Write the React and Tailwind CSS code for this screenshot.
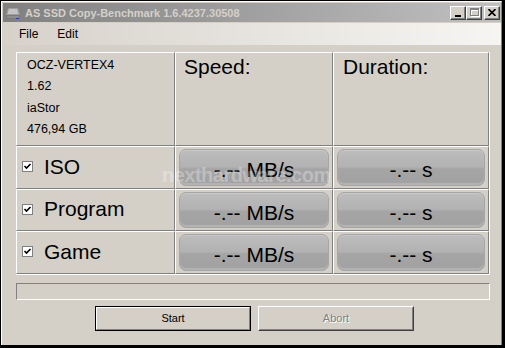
import React from "react";

function Check() {
  return (
    <div className="w-[11px] h-[11px] border border-[#808080] bg-white flex items-center justify-center shrink-0">
      <svg width="9" height="9" viewBox="0 0 9 9">
        <path d="M1.5 4 L3.5 6 L7.5 2" fill="none" stroke="#000" strokeWidth="1.6" />
      </svg>
    </div>
  );
}

function Pill({ children }) {
  return (
    <div className="h-full w-full rounded-[7px] border border-[#a6a6a6] bg-[linear-gradient(to_bottom,#bdbdbd_0%,#b2b2b2_48%,#a5a5a5_54%,#a1a1a1_100%)] shadow-[inset_0_1px_0_#c9c9c9,inset_0_-2px_1px_#b4b4b4] flex items-center justify-center pt-[5px] text-[21px] leading-[24px] text-black">
      {children}
    </div>
  );
}

const cell =
  "border border-t-white border-l-white border-r-[#808080] border-b-[#808080]";

function Row({ label }) {
  return (
    <>
      <div className={`${cell} flex items-center pl-[5px] pb-[2px]`}>
        <Check />
        <span className="ml-[11px] text-[21px] leading-[24px] text-black">{label}</span>
      </div>
      <div className={`${cell} p-[2px] pl-[3px] pr-[3px]`}>
        <Pill>-.-- MB/s</Pill>
      </div>
      <div className={`${cell} p-[2px] pl-[3px] pr-[3px]`}>
        <Pill>-.-- s</Pill>
      </div>
    </>
  );
}

function CapBtn({ children }) {
  return (
    <div className="w-[16px] h-[14px] bg-[#d4d0c8] border border-t-white border-l-white border-r-[#404040] border-b-[#404040] shadow-[inset_-1px_-1px_0_#808080] flex items-center justify-center">
      {children}
    </div>
  );
}

export default function App() {
  return (
    <div className="relative w-[505px] h-[348px] box-border border-t border-l border-r-[3px] border-b-[3px] border-black bg-[#d4d0c8] font-['Liberation_Sans',Arial,sans-serif] overflow-hidden">
      <div className="h-full box-border border-l border-t border-white border-r border-r-[#808080] pl-[1px] pt-[1px] flex flex-col">
        {/* Title bar */}
        <div className="h-[19px] flex items-center bg-[linear-gradient(to_right,#808080,#c0c0c0)] pl-[2px] pr-[1px]">
          <svg width="16" height="14" viewBox="0 0 16 14" className="shrink-0">
            <path d="M3 2 L13 2 L15 9 L1 9 Z" fill="#9c9c9c" />
            <path d="M4 3 L12 3 L13.5 8 L2.5 8 Z" fill="#c4c4c4" />
            <rect x="1" y="9" width="14" height="4" fill="#7a7a7a" />
            <rect x="2" y="10" width="12" height="2" fill="#8e8e8e" />
            <rect x="11" y="12" width="3" height="1" fill="#3a3ab0" />
          </svg>
          <span className="ml-[4px] text-[11px] font-bold text-[#d4d0c8] leading-none pt-[1px]">
            AS SSD Copy-Benchmark 1.6.4237.30508
          </span>
          <div className="ml-auto flex items-center">
            <CapBtn>
              <div className="w-[6px] h-[2px] bg-black mt-[6px] mr-[1px]" />
            </CapBtn>
            <CapBtn>
              <div className="relative w-[9px] h-[9px]">
                <div className="absolute left-[1px] top-[1px] w-[9px] h-[8px] border border-white border-t-2" />
                <div className="absolute left-0 top-0 w-[9px] h-[8px] border border-[#808080] border-t-2" />
              </div>
            </CapBtn>
            <div className="ml-[2px]">
              <CapBtn>
                <svg width="8" height="7" viewBox="0 0 8 7">
                  <path d="M0.5 0 L7.5 7 M7.5 0 L0.5 7" stroke="#000" strokeWidth="1.6" />
                </svg>
              </CapBtn>
            </div>
          </div>
        </div>

        {/* Menu bar */}
        <div className="mt-[1px] h-[22px] flex items-center bg-[linear-gradient(to_right,#d6d2ca,#f6f5f2)] text-[12px] text-black">
          <span className="ml-[16px]">File</span>
          <span className="ml-[19px]">Edit</span>
        </div>

        {/* Grid */}
        <div className="mt-[7px] ml-[13px] w-[474px] box-border border-r border-b border-white grid grid-cols-[159px_158px_156px] grid-rows-[94px_43px_42px_43px]">
          <div className={`${cell} pl-[10px] pt-[2px] text-[12.5px] leading-[21.3px] text-black`}>
            <div>OCZ-VERTEX4</div>
            <div>1.62</div>
            <div>iaStor</div>
            <div>476,94 GB</div>
          </div>
          <div className={`${cell} pl-[8px] pt-[2px] text-[21px] leading-[24px] text-black`}>Speed:</div>
          <div className={`${cell} pl-[9px] pt-[2px] text-[21px] leading-[24px] text-black`}>Duration:</div>
          <Row label="ISO" />
          <Row label="Program" />
          <Row label="Game" />
        </div>

        {/* Progress */}
        <div className="mt-[8px] ml-[13px] w-[474px] h-[17px] box-border border border-t-[#808080] border-l-[#808080] border-r-white border-b-white" />

        {/* Buttons */}
        <div className="mt-[6px] ml-[92px] flex gap-[7px]">
          <div className="w-[156px] h-[25px] box-border border border-black">
            <div className="h-full border border-t-white border-l-white border-r-[#808080] border-b-[#808080] flex items-center justify-center text-[11px] text-black">
              Start
            </div>
          </div>
          <div className="w-[156px] h-[25px] box-border border border-t-white border-l-white border-r-[#404040] border-b-[#404040]">
            <div className="h-full border border-transparent border-r-[#808080] border-b-[#808080] flex items-center justify-center text-[11px] text-[#808080] [text-shadow:1px_1px_0_#ffffff]">
              Abort
            </div>
          </div>
        </div>
      </div>

      {/* watermark */}
      <div className="absolute left-[161px] top-[164px] text-[20px] leading-[20px] font-bold tracking-[-0.5px] text-white/30 pointer-events-none">
        nexthardware.com
      </div>
    </div>
  );
}
